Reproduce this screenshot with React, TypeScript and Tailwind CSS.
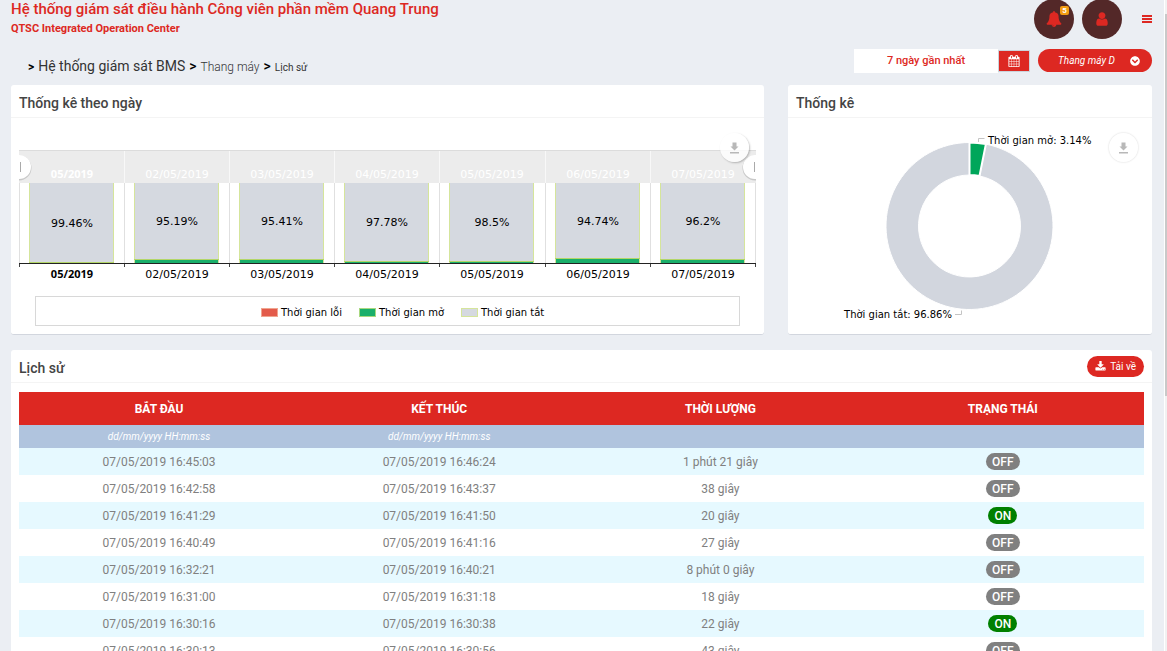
import type { ReactNode } from "react";
import { FaChevronCircleDown } from "react-icons/fa";
import { clsx } from "clsx";

const BELL =
  "M912 1696q0-16-16-16-59 0-101.500-42.500t-42.500-101.500q0-16-16-16t-16 16q0 73 51.500 124.500t124.500 51.500q16 0 16-16zm816-288q0 52-38 90t-90 38h-448q0 106-75 181t-181 75-181-75-75-181h-448q-52 0-90-38t-38-90q50-42 91-88t85-119.500 74.500-158.500 50-206 19.500-260q0-152 117-282.500t307-158.500q-8-19-8-39 0-40 28-68t68-28 68 28 28 68q0 20-8 39 190 28 307 158.500t117 282.500q0 139 19.500 260t50 206 74.500 158.500 85 119.500 91 88z";
const USER =
  "M1536 1399q0 109-62.500 187t-150.500 78h-854q-88 0-150.500-78t-62.500-187q0-85 8.500-160.500t31.500-152 58.500-131 94-89 134.500-34.500q131 128 313 128t313-128q76 0 134.500 34.500t94 89 58.500 131 31.500 152 8.500 160.500zm-256-887q0 159-112.500 271.500t-271.500 112.500-271.500-112.500-112.500-271.500 112.500-271.500 271.500-112.500 271.500 112.500 112.500 271.500z";
const CALENDAR =
  "M192 1664h288v-288h-288v288zm352 0h320v-288h-320v288zm-352-352h288v-320h-288v320zm352 0h320v-320h-320v320zm-352-384h288v-288h-288v288zm736 736h320v-288h-320v288zm-384-736h320v-288h-320v288zm768 736h288v-288h-288v288zm-384-352h320v-320h-320v320zm-352-864v-288q0-13-9.500-22.500t-22.500-9.500h-64q-13 0-22.500 9.500t-9.500 22.500v288q0 13 9.500 22.500t22.500 9.500h64q13 0 22.500-9.500t9.500-22.500zm736 864h288v-320h-288v320zm-384-384h320v-288h-320v288zm384 0h288v-288h-288v288zm32-480v-288q0-13-9.500-22.500t-22.500-9.500h-64q-13 0-22.500 9.500t-9.500 22.500v288q0 13 9.500 22.500t22.500 9.500h64q13 0 22.500-9.500t9.500-22.500zm384-64v1280q0 52-38 90t-90 38h-1408q-52 0-90-38t-38-90v-1280q0-52 38-90t90-38h128v-96q0-66 47-113t113-47h64q66 0 113 47t47 113v96h384v-96q0-66 47-113t113-47h64q66 0 113 47t47 113v96h128q52 0 90 38t38 90z";
const DOWNLOAD =
  "M1344 1344q0-26-19-45t-45-19-45 19-19 45 19 45 45 19 45-19 19-45zm256 0q0-26-19-45t-45-19-45 19-19 45 19 45 45 19 45-19 19-45zm128-224v320q0 40-28 68t-68 28h-1472q-40 0-68-28t-28-68v-320q0-40 28-68t68-28h465l135 136q58 56 136 56t136-56l136-136h464q40 0 68 28t28 68zm-325-569q17 41-14 70l-448 448q-18 19-45 19t-45-19l-448-448q-31-29-14-70 17-39 59-39h256v-448q0-26 19-45t45-19h256q26 0 45 19t19 45v448h256q42 0 59 39z";

const days = [
  { label: "05/2019", off: 99.46, bold: true },
  { label: "02/05/2019", off: 95.19 },
  { label: "03/05/2019", off: 95.41 },
  { label: "04/05/2019", off: 97.78 },
  { label: "05/05/2019", off: 98.5 },
  { label: "06/05/2019", off: 94.74 },
  { label: "07/05/2019", off: 96.2 },
];

const legend = [
  { label: "Thời gian lỗi", x: 242, fill: "#e35b4b", stroke: "#f0a58f" },
  { label: "Thời gian mở", x: 340, fill: "#1aaf6a", stroke: "#a8d880" },
  { label: "Thời gian tắt", x: 442, fill: "#d5d9e0", stroke: "#d5e59b" },
];

const history = [
  { start: "07/05/2019 16:45:03", end: "07/05/2019 16:46:24", duration: "1 phút 21 giây", on: false },
  { start: "07/05/2019 16:42:58", end: "07/05/2019 16:43:37", duration: "38 giây", on: false },
  { start: "07/05/2019 16:41:29", end: "07/05/2019 16:41:50", duration: "20 giây", on: true },
  { start: "07/05/2019 16:40:49", end: "07/05/2019 16:41:16", duration: "27 giây", on: false },
  { start: "07/05/2019 16:32:21", end: "07/05/2019 16:40:21", duration: "8 phút 0 giây", on: false },
  { start: "07/05/2019 16:31:00", end: "07/05/2019 16:31:18", duration: "18 giây", on: false },
  { start: "07/05/2019 16:30:16", end: "07/05/2019 16:30:38", duration: "22 giây", on: true },
  { start: "07/05/2019 16:30:13", end: "07/05/2019 16:30:56", duration: "43 giây", on: false },
];

function Icon({ path, className }: { path: string; className?: string }) {
  return (
    <svg viewBox="0 0 1792 1792" className={className} fill="currentColor" aria-hidden>
      <path d={path} />
    </svg>
  );
}

function Card({
  title,
  action,
  children,
}: {
  title: string;
  action?: ReactNode;
  children: ReactNode;
}) {
  return (
    <section className="min-w-0 rounded-[3px] border-b border-[#d2d6de] bg-white">
      <div className="flex h-[33px] items-center justify-between border-b border-[#f4f4f4] px-2">
        <h2 className="pt-1 text-sm font-medium text-[#444444]">{title}</h2>
        {action}
      </div>
      {children}
    </section>
  );
}

function ExportButton({ className }: { className: string }) {
  return (
    <button
      type="button"
      aria-label="Export chart"
      className={clsx(
        "absolute flex size-[29px] items-center justify-center rounded-full bg-white/80 text-[#b8b8b8]",
        className,
      )}
    >
      <svg viewBox="0 0 11 12" className="h-3 w-[11px]" fill="currentColor" aria-hidden>
        <path d="M3.500 0.500h4v4h2l-4 4-4-4h2zM1 10h9v1.500h-9z" />
      </svg>
    </button>
  );
}

function DailyChart() {
  const step = 105.2;

  return (
    <div className="relative px-2 pb-2">
      <svg
        viewBox="0 0 737 208"
        className="block w-full font-['Verdana','DejaVu_Sans',sans-serif] text-[11px]"
        role="img"
        aria-label="Thống kê theo ngày"
      >
        {days.map((day, i) => {
          const x = Math.floor(i * step);
          const greenHeight = Math.floor(((100 - day.off) / 100) * 80);
          const top = 145 - greenHeight;

          return (
            <g key={day.label}>
              <path d={`M${x + 0.5} 65V145`} stroke="#e0e0e0" />
              <rect x={x + 10} y={65} width={85} height={80} fill="#d5d9e0" />
              <path d={`M${x + 10.5} 65V145M${x + 94.5} 65V145`} stroke="#d5e59b" />
              <rect x={x + 11} y={top} width={83} height={greenHeight} fill="#1aaf6a" />
              <path d={`M${x + 10} ${top - 0.5}h85`} stroke="#b3d668" />
              <text x={x + 53} y={day.off > 99 ? 109 : 107 + (day.off > 97.5 ? 1 : 0)} textAnchor="middle">
                {day.off}%
              </text>
              <text
                x={x + 53}
                y={160}
                textAnchor="middle"
                className={clsx(day.bold && "font-['Open_Sans',sans-serif] font-bold")}
              >
                {day.label}
              </text>
            </g>
          );
        })}
        <path d="M736.500 65V145" stroke="#e0e0e0" />

        {/* zoom strip over the top of the plot */}
        <rect x={0} y={32} width={737} height={33} fill="#ececec" />
        <path d="M0 32.500H737" stroke="#dcdcdc" />
        {days.map((day, i) => {
          const x = Math.floor(i * step);
          return (
            <g key={day.label}>
              {i > 0 && <path d={`M${x + 0.5} 33V65`} stroke="#f8f8f8" />}
              <text
                x={x + 53}
                y={60}
                textAnchor="middle"
                fill="#ffffff"
                className={clsx(day.bold && "font-['Open_Sans',sans-serif] font-bold")}
              >
                {day.label}
              </text>
            </g>
          );
        })}
        {[0, 736].map((cx) => (
          <g key={cx}>
            <circle cx={cx} cy={50} r={12.500} fill="#c8c8c8" />
            <circle cx={cx} cy={49} r={12} fill="#ffffff" />
            <path d={`M${cx === 0 ? 1.5 : 735.5} 44v10`} stroke="#aaaaaa" />
          </g>
        ))}

        <path d="M0 145.500H737" stroke="#222222" />
        {[0, 1, 2, 3, 4, 5, 6, 7].map((i) => (
          <path key={i} d={`M${Math.floor(i * step) + 0.5} 146v3`} stroke="#444444" />
        ))}

        <rect x={16.500} y={178.500} width={704} height={29} fill="none" stroke="#d8d8d8" />
        {legend.map((item) => (
          <g key={item.label}>
            <rect x={item.x + 0.5} y={190.500} width={16} height={8} fill={item.fill} stroke={item.stroke} />
            <text x={item.x + 20} y={198} className="text-[10px]">
              {item.label}
            </text>
          </g>
        ))}
      </svg>
      <ExportButton className="right-[15px] top-[15px] shadow-[1px_1px_2px_rgba(0,0,0,0.25)]" />
    </div>
  );
}

function DonutChart() {
  const cx = 173.5;
  const cy = 108;
  const outer = 83.5;
  const inner = 51;
  const angle = 0.0314 * 2 * Math.PI;
  const sin = Math.sin(angle);
  const cos = Math.cos(angle);
  const top = `${cx} ${cy - outer}`;
  const topInner = `${cx} ${cy - inner}`;
  const edge = `${cx + outer * sin} ${cy - outer * cos}`;
  const edgeInner = `${cx + inner * sin} ${cy - inner * cos}`;

  return (
    <div className="relative px-2 pb-2">
      <svg
        viewBox="0 0 348 208"
        className="block w-full font-['Verdana','DejaVu_Sans',sans-serif] text-[10px]"
        role="img"
        aria-label="Thống kê"
      >
        <path
          d={`M${edge}A${outer} ${outer} 0 1 1 ${top}L${topInner}A${inner} ${inner} 0 1 0 ${edgeInner}Z`}
          fill="#d2d6de"
          stroke="#ffffff"
        />
        <path
          d={`M${top}A${outer} ${outer} 0 0 1 ${edge}L${edgeInner}A${inner} ${inner} 0 0 0 ${topInner}Z`}
          fill="#00a65a"
          stroke="#ffffff"
          strokeWidth={2}
        />
        <path d="M182.500 24v-3.500h6M159 196.500h6.500v-4" fill="none" stroke="#c4c4c4" />
        <text x={192} y={26}>
          Thời gian mở: 3.14%
        </text>
        <text x={156} y={200} textAnchor="end">
          Thời gian tắt: 96.86%
        </text>
      </svg>
      <ExportButton className="right-3.5 top-[15px] shadow-[0_0_2px_rgba(0,0,0,0.2)]" />
    </div>
  );
}

function Header() {
  return (
    <header className="flex h-10 items-start justify-between">
      <div>
        <h1 className="text-[15px] leading-[19px] font-medium text-[#dd2822]">
          Hệ thống giám sát điều hành Công viên phần mềm Quang Trung
        </h1>
        <p className="text-[11px] leading-[19px] font-bold text-[#dd2822]">
          QTSC Integrated Operation Center
        </p>
      </div>
      <div className="-mt-px flex items-center gap-2 text-[#dd2822]">
        <button
          type="button"
          aria-label="Notifications"
          className="relative flex size-10 items-center justify-center rounded-full bg-[#532828]"
        >
          <Icon path={BELL} className="size-4" />
          <span className="absolute top-[7px] right-[5px] flex h-[9px] w-[9px] items-center justify-center rounded-[2px] bg-[#f39c12] text-[8px] font-bold text-white">
            5
          </span>
        </button>
        <button
          type="button"
          aria-label="Account"
          className="flex size-10 items-center justify-center rounded-full bg-[#532828]"
        >
          <Icon path={USER} className="size-4" />
        </button>
        <button type="button" aria-label="Menu" className="ml-3">
          <svg viewBox="0 0 10 8" className="h-2 w-2.5" fill="currentColor" aria-hidden>
            <path d="M0 0h10v2H0zM0 3h10v2H0zM0 6h10v2H0z" />
          </svg>
        </button>
      </div>
    </header>
  );
}

function Toolbar() {
  return (
    <div className="mt-[9px] flex h-6 items-start justify-between">
      <nav aria-label="Breadcrumb" className="flex items-baseline gap-1 pt-[7px] pl-[17px] text-[#333333]">
        <span className="text-xs font-bold text-black">&gt;</span>
        <a href="#bms" className="text-sm">
          Hệ thống giám sát BMS
        </a>
        <span className="text-sm font-medium text-black">&gt;</span>
        <a href="#elevator" className="text-xs font-light">
          Thang máy
        </a>
        <span className="text-sm font-medium text-black">&gt;</span>
        <a href="#history" className="text-[10px]">
          Lịch sử
        </a>
      </nav>
      <div className="flex items-start gap-2">
        <div className="flex items-center">
          <input
            type="text"
            readOnly
            aria-label="Khoảng thời gian"
            defaultValue="7 ngày gần nhất"
            className="h-6 w-36 bg-white pb-0.5 text-center text-[11px] font-medium text-[#dd2822] outline-none"
          />
          <button
            type="button"
            aria-label="Chọn ngày"
            className="flex h-[22px] w-8 items-center justify-center border border-[#ccd3db] bg-[#dd2822] text-white"
          >
            <Icon path={CALENDAR} className="size-3" />
          </button>
        </div>
        <div className="relative text-white">
          <select
            aria-label="Thang máy"
            className="block h-[23px] w-[114px] appearance-none rounded-full bg-[#dd2822] pl-5 text-[10px] italic outline-none"
          >
            <option>Thang máy D</option>
          </select>
          <FaChevronCircleDown className="pointer-events-none absolute top-[7px] right-3 size-2.5" aria-hidden />
        </div>
      </div>
    </div>
  );
}

function HistoryTable() {
  return (
    <table className="w-full table-fixed text-center">
      <colgroup>
        <col className="w-[24.9%]" />
        <col className="w-[24.9%]" />
        <col className="w-[25.1%]" />
        <col className="w-[25.1%]" />
      </colgroup>
      <thead>
        <tr className="h-[33px] bg-[#dd2822] text-xs text-white">
          <th scope="col">BẮT ĐẦU</th>
          <th scope="col">KẾT THÚC</th>
          <th scope="col">THỜI LƯỢNG</th>
          <th scope="col">TRẠNG THÁI</th>
        </tr>
        <tr className="h-[23px] bg-[#b0c4de]">
          {["Lọc bắt đầu", "Lọc kết thúc"].map((label) => (
            <td key={label} className="p-0">
              <input
                type="text"
                aria-label={label}
                placeholder="dd/mm/yyyy HH:mm:ss"
                className="block h-[23px] w-full bg-transparent text-center text-[10px] italic outline-none placeholder:text-white"
              />
            </td>
          ))}
          <td />
          <td />
        </tr>
      </thead>
      <tbody>
        {history.map((row) => (
          <tr key={row.start} className="h-[27px] text-xs text-[#808080] odd:bg-[#e6f9ff]">
            <td>{row.start}</td>
            <td>{row.end}</td>
            <td>{row.duration}</td>
            <td>
              <span
                className={clsx(
                  "inline-block h-[17px] rounded-full px-1.5 leading-[18px] font-medium text-white",
                  row.on ? "bg-[#008000]" : "bg-[#808080]",
                )}
              >
                {row.on ? "ON" : "OFF"}
              </span>
            </td>
          </tr>
        ))}
      </tbody>
    </table>
  );
}

export default function App() {
  return (
    <div className="flex h-screen overflow-hidden bg-[#ebeef3] font-['Roboto',sans-serif]">
      <main className="min-w-0 flex-1 pr-3 pl-[11px]">
        <Header />
        <Toolbar />
        <div className="mt-3 grid grid-cols-[753fr_364fr] gap-6">
          <Card title="Thống kê theo ngày">
            <DailyChart />
          </Card>
          <Card title="Thống kê">
            <DonutChart />
          </Card>
        </div>
        <div className="mt-[15px]">
          <Card
            title="Lịch sử"
            action={
              <button
                type="button"
                className="flex h-[21px] items-center gap-1 rounded-full bg-[#dd2822] px-2 text-[10px] text-white"
              >
                <Icon path={DOWNLOAD} className="size-[11px]" />
                Tải về
              </button>
            }
          >
            <div className="px-2 pt-[9px] pb-2">
              <HistoryTable />
            </div>
          </Card>
        </div>
      </main>
      <div className="w-[3px] border-l border-white bg-[#f1f1f1] pt-3.5" aria-hidden>
        <div className="h-3/5 bg-[#c9c9c9]" />
      </div>
    </div>
  );
}
